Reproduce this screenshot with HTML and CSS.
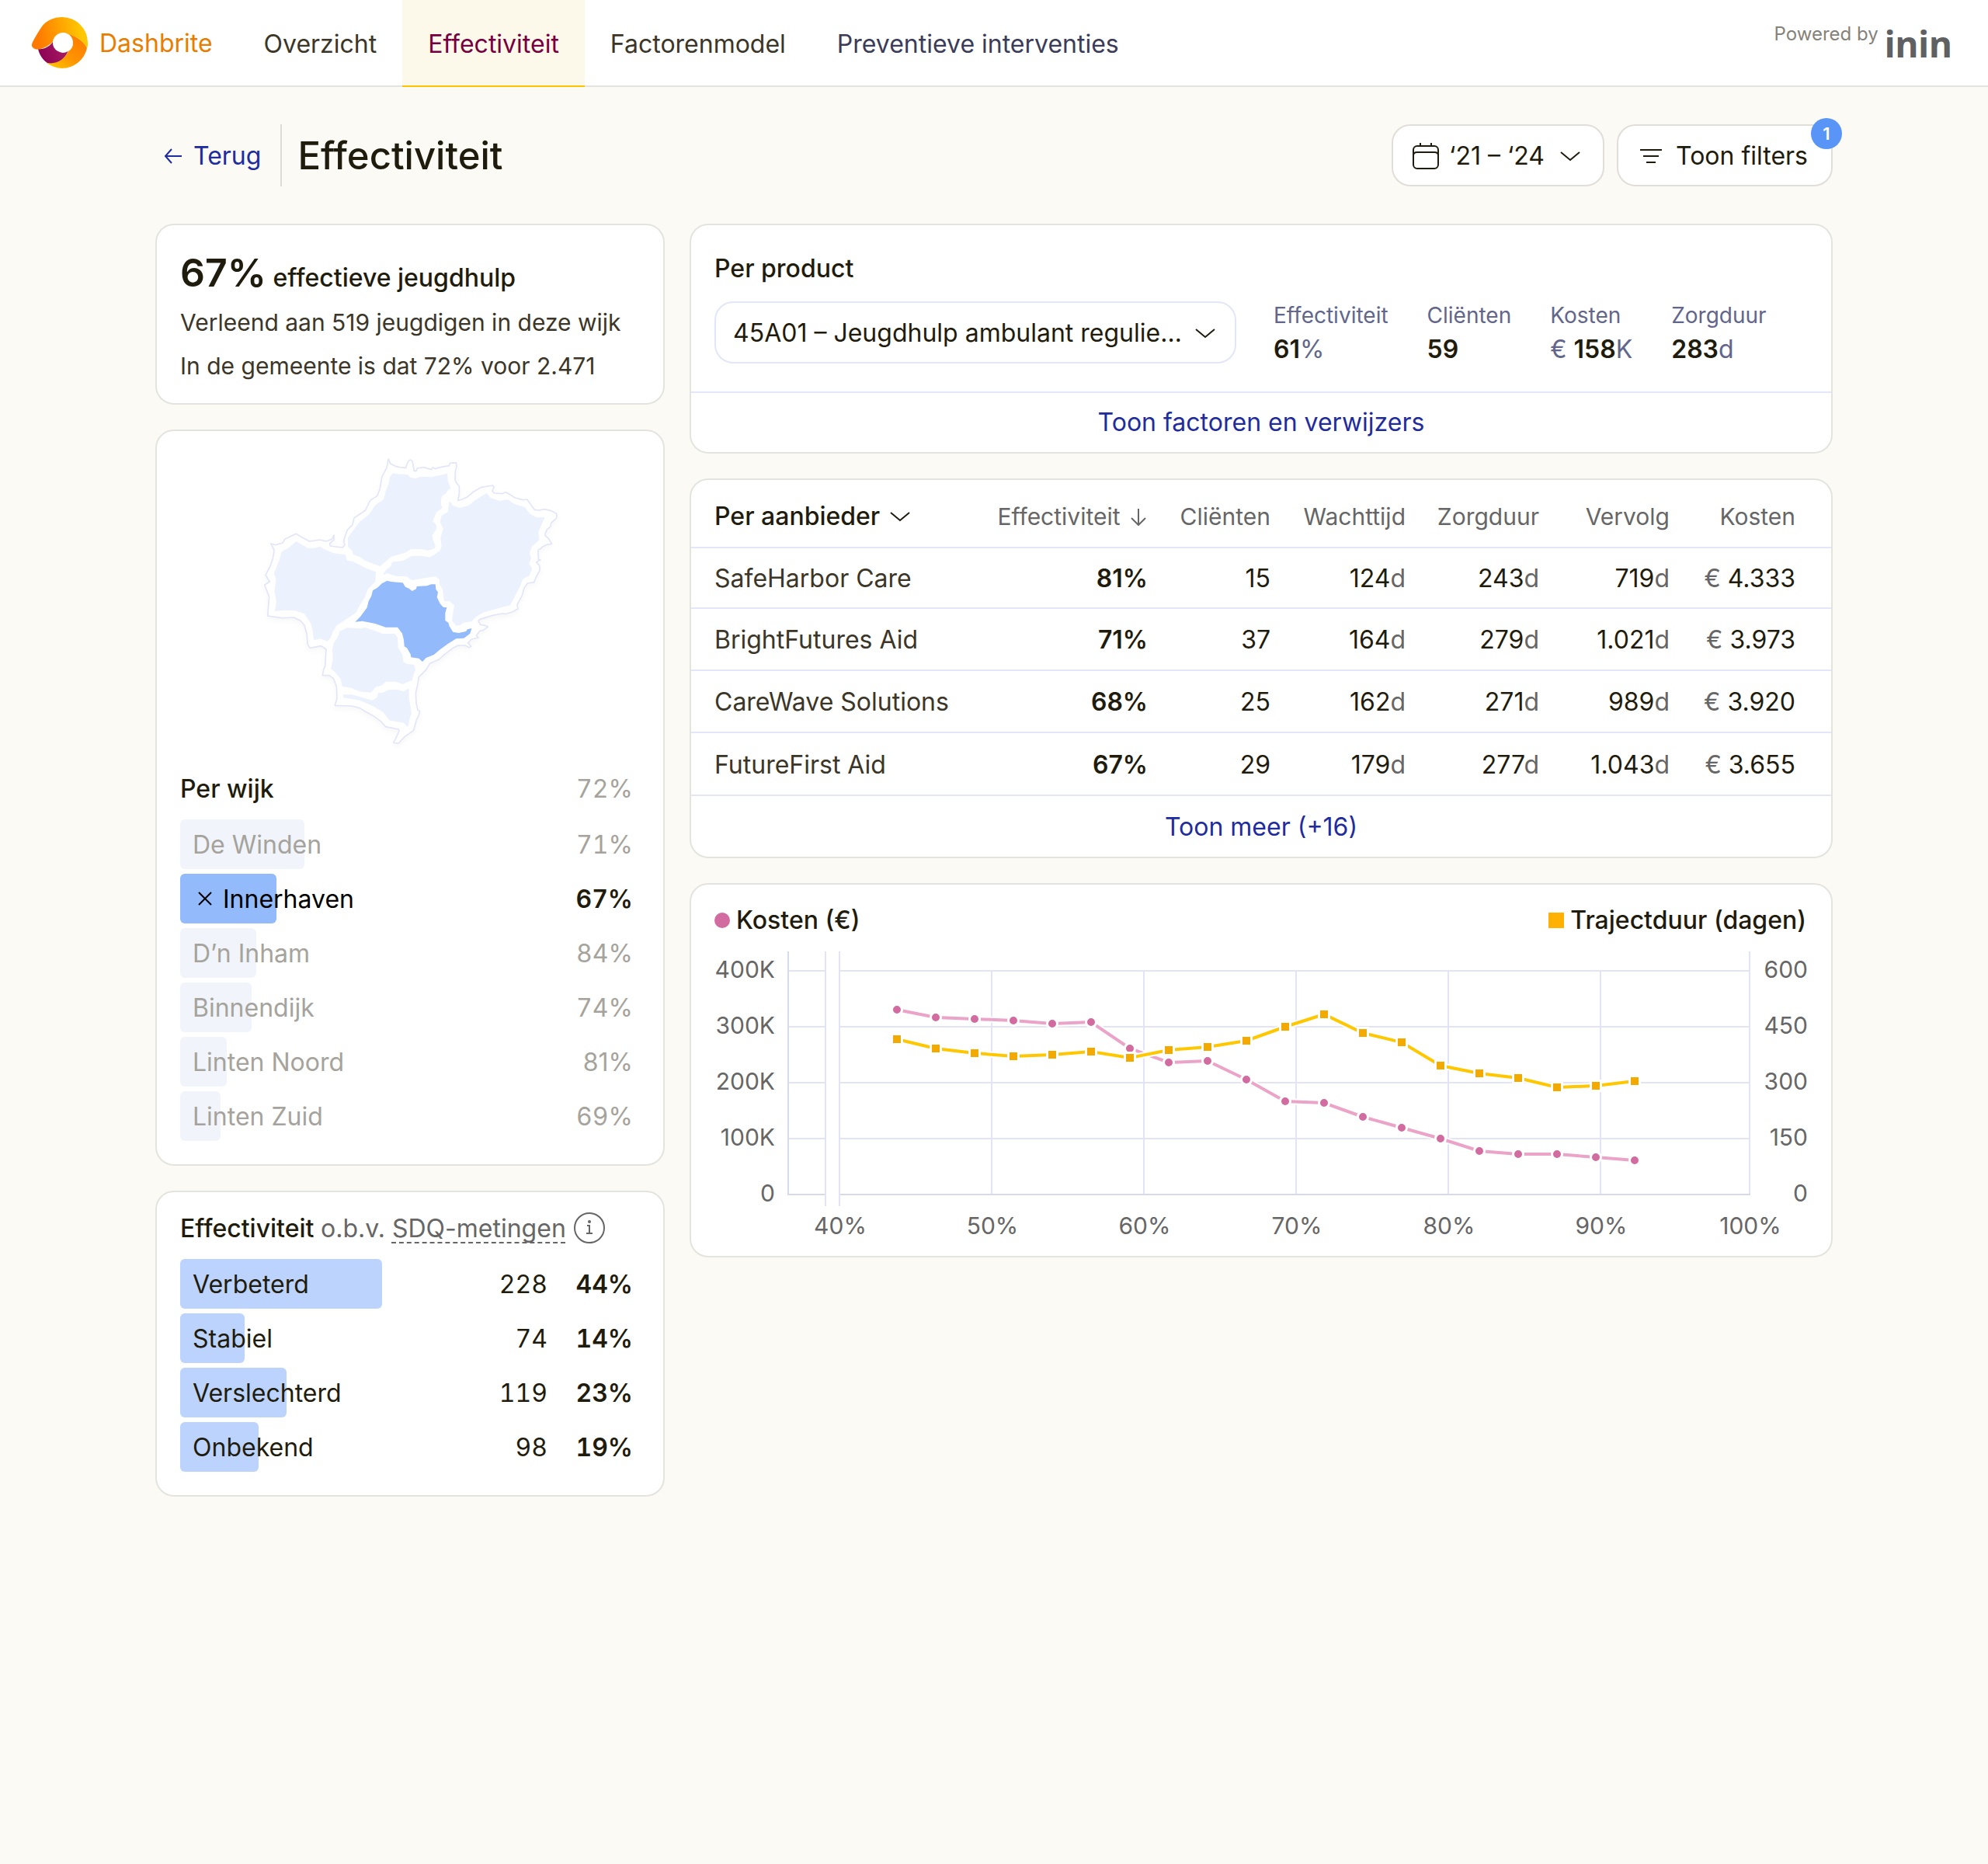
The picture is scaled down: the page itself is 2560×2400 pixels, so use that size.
FILE: index.html
```html
<!DOCTYPE html>
<html lang="nl">
<head>
  <meta charset="UTF-8">
  <meta name="viewport" content="width=device-width, initial-scale=1.0">
  <title>Dashbrite - Effectiviteit</title>
  <link rel="stylesheet" href="styles.css">
</head>
<body>

  <header class="topbar">
    <a class="brand" href="#">
      <svg class="brand-logo" viewBox="0 0 73 66" aria-hidden="true">
        <defs>
          <linearGradient id="logo-top" x1="0" y1="0.5" x2="1" y2="0.4">
            <stop offset="0.1" stop-color="#ff7a00"/>
            <stop offset="0.9" stop-color="#ffc800"/>
          </linearGradient>
          <linearGradient id="logo-bottom" x1="0.1" y1="1" x2="0.8" y2="0.2">
            <stop offset="0" stop-color="#ffc800"/>
            <stop offset="0.5" stop-color="#ff9500"/>
            <stop offset="1" stop-color="#ff8000"/>
          </linearGradient>
          <linearGradient id="logo-purple" x1="0" y1="0.6" x2="1" y2="0.3">
            <stop offset="0" stop-color="#8c0055"/>
            <stop offset="1" stop-color="#a81e62"/>
          </linearGradient>
        </defs>
        <path fill="url(#logo-bottom)" d="M46 21C58 24 69 32 72 40A33 33 0 0 1 40 66C33 66 26 63 20 59C32 60 42 56 48 44A13 13 0 0 0 46 21Z"/>
        <path fill="url(#logo-purple)" d="M9 41C11 49 15 55 21 59C33 61 43 55 47.500 44A13 13 0 0 1 28 32C24 38 16 42 9 41Z"/>
        <path fill="url(#logo-top)" d="M1 35C2 31 10 18 14 12C20 4 30 0 40 0A33 33 0 0 1 73 33C73 36 73 38 72 40C68 32 60 25 47 21.500A13 13 0 0 0 28 32C24 36 17 40 12 41C5 43 0 39 1 35Z"/>
      </svg>
      <span>Dashbrite</span>
    </a>
    <nav class="nav">
      <a href="#">Overzicht</a>
      <a class="active" href="#">Effectiviteit</a>
      <a href="#">Factorenmodel</a>
      <a class="preventie" href="#">Preventieve interventies</a>
    </nav>
    <div class="powered">
      <span>Powered by</span>
      <strong>inin</strong>
    </div>
  </header>

  <main class="page">
    <div class="page-head">
      <a class="back" href="#">
        <svg width="24" height="24" viewBox="0 0 24 24" aria-hidden="true"><path d="M23 12H2M10 3L2 12L10 21"/></svg>
        Terug
      </a>
      <h1>Effectiviteit</h1>
      <div class="actions">
        <button class="button" type="button">
          <svg width="36" height="36" viewBox="0 0 36 36" aria-hidden="true"><rect x="2" y="5" width="32" height="29" rx="5"/><path d="M2 17C2 14 4 13 7 13H29C32 13 34 14 34 17M11 1V5M25 1V5"/></svg>
          ‘21 – ‘24
          <svg class="chevron" width="28" height="28" viewBox="0 0 28 28" aria-hidden="true"><path d="M2 9L14 19L26 9"/></svg>
        </button>
        <button class="button filters" type="button">
          <svg width="28" height="20" viewBox="0 0 28 20" aria-hidden="true"><path d="M0 2H28M4 10H24M8 18H20"/></svg>
          Toon filters
          <span class="badge">1</span>
        </button>
      </div>
    </div>

    <div class="columns">
      <div class="column">
        <section class="card summary">
          <h2><strong>67%</strong> effectieve jeugdhulp</h2>
          <p>Verleend aan 519 jeugdigen in deze wijk</p>
          <p>In de gemeente is dat 72% voor 2.471</p>
        </section>

        <section class="card districts">
          <svg class="map" viewBox="-6 0 1260 1230" role="img" aria-label="Kaart van de wijken">
            <path class="map-outline" d="M541 66L548 84L568 94L585 98L608 100C612 90 614 72 625 69C634 72 634 76 636 90L640 112L648 112L652 102L677 98L707 107L712 99L720 104L745 97L775 92L778 82L802 80L804 96L799 110L798 145C800 160 812 165 814 172L814 200L809 226L826 222L846 212L870 192L900 175L944 168L948 174L942 190L950 198L980 200L992 194L1002 198L1030 216L1060 224L1076 222L1105 262L1125 264L1142 260L1170 266L1188 276C1194 286 1192 292 1186 298L1170 312L1166 328L1153 338L1147 352L1146 362L1158 372L1172 394L1154 396L1134 406L1130 412L1120 416L1118 424L1120 440L1120 454L1128 456L1118 460L1112 465L1124 478L1126 494L1114 516L1103 542L1078 546L1066 562L1056 596L1038 628L1041 644L1020 656L996 664L980 663L940 671L894 685L888 692L896 706L918 710L925 714L906 728L894 730L880 748L888 756L862 762L848 776L860 790L852 794L836 786L810 786L790 796L758 820L736 840L700 856L686 880L658 908L654 935L646 970L648 1010L654 1036L662 1040L658 1056L648 1076L638 1114L604 1138L580 1164L560 1162L568 1148L582 1116L580 1110L530 1100L510 1078L482 1058L446 1038L430 1028L400 1020L334 1018L342 990L340 945L328 914L312 902L286 902L290 880L296 866L300 800L280 788L238 796L228 780L226 745L216 708L200 690L175 678L130 680L74 672L78 620L80 598L62 552L82 540L66 514L84 480L94 450L100 418L86 392L104 398L132 390L140 376L155 368L184 355L206 368L236 384L275 378L300 384L322 376L330 360L330 378L314 392L316 402L364 408L372 398L368 380L382 340L402 320L408 294L452 264L470 226L498 208L508 180L516 134L534 100Z"/>
            <path class="map-area" d="M558 120L575 124L614 126L626 137L645 141L665 134L706 136L735 130L769 122L770 150L782 180L772 184L762 200L750 206L744 218L744 240L748 256L726 272L712 306L724 318L728 334L710 360L712 378L722 400L720 410L694 420L670 414L628 414L605 428L570 438L550 444L530 462L508 480L480 470L450 458L430 444L404 435L400 420L384 404L384 370L402 345L428 310L466 280L490 244L522 222L530 190L542 160L546 135Z"/>
            <path class="map-area" d="M920 198L935 216L970 228L1000 222L1028 240L1068 252L1085 276L1112 292L1145 290L1132 320L1120 350L1124 378L1094 405L1086 430L1092 450L1084 470L1096 490L1085 516L1060 530L1048 560L1030 595L1012 630L975 640L910 658L880 674L862 694L830 698L818 708L802 710L786 690L790 660L795 630L775 614L756 616L752 590L750 570L738 550L738 532L722 520L680 526L632 534L610 520L570 518L535 508L518 516L530 496L550 480L555 464L600 458L630 440L670 440L700 446L740 420L746 405L742 370L752 335L740 310L746 285L770 270L776 228L790 246L815 255L850 246L875 225Z"/>
            <path class="map-area" d="M184 384L205 396L230 410L254 410L276 404L296 416L330 430L375 436L380 458L405 462L455 488L492 502L490 540L460 570L450 600L430 630L415 660L375 686L340 710L325 735L318 755L305 770L276 760L252 766L248 730L240 700L216 664L180 652L140 650L102 654L108 615L100 580L106 530L98 508L118 460L128 424L156 408Z"/>
            <path class="map-area selected" d="M536 536L550 540L596 544L606 560L620 566L632 576L648 568L650 558L690 556L706 550L722 550L724 570L732 580L728 600L740 625L752 638L766 640L760 660L760 690L772 698L776 712L790 734L812 738L840 732L846 724L862 720L856 740L832 758L802 760L770 780L740 802L716 822L686 834L672 849L658 836L628 832L626 820L612 796L602 790L600 765L594 740L576 716L530 716L490 702L440 692L412 695L432 675L458 640L464 615L475 595L480 574L500 562L516 546Z"/>
            <path class="map-area" d="M352 732L380 718L436 720L450 716L485 728L520 742L565 740L576 755L578 795L594 820L598 850L612 858L640 860L645 880L634 910L634 920L595 936L570 926L530 926L515 940L490 948L474 968L430 964L395 950L362 944L356 915L335 890L318 876L326 840L324 800L330 775L344 755Z"/>
            <path class="map-area" d="M366 976L400 976L440 988L478 998L498 986L500 970L520 968L540 958L575 956L598 964L620 952L620 990L630 1048L622 1070L616 1102L600 1085L545 1076L520 1044L480 1020L430 998L366 988Z"/>
          </svg>
          <div class="card-title">
            <h2>Per wijk</h2>
            <span class="value">72%</span>
          </div>
          <ul class="bars">
            <li><button type="button"><span class="bar" style="width: 160px"></span><span class="name">De Winden</span><span class="value">71%</span></button></li>
            <li><button class="selected" type="button"><span class="bar" style="width: 124px"></span><svg class="close" width="18" height="18" viewBox="0 0 18 18" aria-hidden="true"><path d="M1 1L17 17M17 1L1 17"/></svg><span class="name">Innerhaven</span><span class="value">67%</span></button></li>
            <li><button type="button"><span class="bar" style="width: 98px"></span><span class="name">D’n Inham</span><span class="value">84%</span></button></li>
            <li><button type="button"><span class="bar" style="width: 92px"></span><span class="name">Binnendijk</span><span class="value">74%</span></button></li>
            <li><button type="button"><span class="bar" style="width: 60px"></span><span class="name">Linten Noord</span><span class="value proportional">81%</span></button></li>
            <li><button type="button"><span class="bar" style="width: 52px"></span><span class="name">Linten Zuid</span><span class="value">69%</span></button></li>
          </ul>
        </section>

        <section class="card sdq">
          <div class="card-title">
            <h2>Effectiviteit <span class="basis">o.b.v. <a href="#">SDQ-metingen</a></span></h2>
            <button class="info" type="button" aria-label="Uitleg">
              <svg width="40" height="40" viewBox="0 0 40 40" aria-hidden="true"><circle cx="20" cy="20" r="19"/><path d="M17 17H20V27M16 27H24"/><circle class="dot" cx="20" cy="12" r="2"/></svg>
            </button>
          </div>
          <ul class="bars">
            <li><span class="bar" style="width: 260px"></span><span class="name">Verbeterd</span><span class="count">228</span><span class="value">44%</span></li>
            <li><span class="bar" style="width: 83px"></span><span class="name">Stabiel</span><span class="count">74</span><span class="value">14%</span></li>
            <li><span class="bar" style="width: 137px"></span><span class="name">Verslechterd</span><span class="count">119</span><span class="value">23%</span></li>
            <li><span class="bar" style="width: 101px"></span><span class="name">Onbekend</span><span class="count">98</span><span class="value">19%</span></li>
          </ul>
        </section>
      </div>

      <div class="column">
        <section class="card product">
          <div class="product-body">
            <div class="product-choice">
              <label for="product">Per product</label>
              <div class="select">
                <select id="product">
                  <option>45A01 – Jeugdhulp ambulant regulie…</option>
                </select>
                <svg class="chevron" width="28" height="28" viewBox="0 0 28 28" aria-hidden="true"><path d="M2 9L14 19L26 9"/></svg>
              </div>
            </div>
            <dl class="stats">
              <div><dt>Effectiviteit</dt><dd><b>61</b>%</dd></div>
              <div><dt>Cliënten</dt><dd><b>59</b></dd></div>
              <div><dt>Kosten</dt><dd>€ <b>158</b>K</dd></div>
              <div><dt>Zorgduur</dt><dd><b>283</b>d</dd></div>
            </dl>
          </div>
          <a class="card-link" href="#">Toon factoren en verwijzers</a>
        </section>

        <section class="card providers">
          <table>
            <thead>
              <tr>
                <th class="col-name"><button type="button">Per aanbieder <svg class="chevron" width="28" height="28" viewBox="0 0 28 28" aria-hidden="true"><path d="M2 9L14 19L26 9"/></svg></button></th>
                <th class="col-effect">Effectiviteit <svg class="sort" width="20" height="22" viewBox="0 0 20 22" aria-hidden="true"><path d="M10 0V20M1 12L10 21L19 12"/></svg></th>
                <th class="col-clients">Cliënten</th>
                <th class="col-wait">Wachttijd</th>
                <th class="col-care">Zorgduur</th>
                <th class="col-next">Vervolg</th>
                <th class="col-cost">Kosten</th>
              </tr>
            </thead>
            <tbody>
              <tr><td>SafeHarbor Care</td><td>81%</td><td>15</td><td>124<i>d</i></td><td>243<i>d</i></td><td>719<i>d</i></td><td><i>€</i> 4.333</td></tr>
              <tr><td>BrightFutures Aid</td><td>71%</td><td>37</td><td>164<i>d</i></td><td>279<i>d</i></td><td>1.021<i>d</i></td><td><i>€</i> 3.973</td></tr>
              <tr><td>CareWave Solutions</td><td>68%</td><td>25</td><td>162<i>d</i></td><td>271<i>d</i></td><td>989<i>d</i></td><td><i>€</i> 3.920</td></tr>
              <tr><td>FutureFirst Aid</td><td>67%</td><td>29</td><td>179<i>d</i></td><td>277<i>d</i></td><td>1.043<i>d</i></td><td><i>€</i> 3.655</td></tr>
            </tbody>
          </table>
          <a class="card-link" href="#">Toon meer (+16)</a>
        </section>

        <section class="card trend">
          <div class="legend">
            <span class="legend-cost">Kosten (€)</span>
            <span class="legend-days">Trajectduur (dagen)</span>
          </div>
          <svg class="chart" viewBox="0 0 1408 370" role="img" aria-label="Kosten en trajectduur per effectiviteit">
            <defs>
              <marker id="dot" markerUnits="userSpaceOnUse" markerWidth="18" markerHeight="18" refX="9" refY="9">
                <circle cx="9" cy="9" r="6.500" fill="#d16ba0" stroke="#fff" stroke-width="3"/>
              </marker>
              <marker id="square" markerUnits="userSpaceOnUse" markerWidth="18" markerHeight="18" refX="9" refY="9">
                <rect x="2.500" y="2.500" width="13" height="13" fill="#f2a900" stroke="#fff" stroke-width="3"/>
              </marker>
            </defs>
            <path class="grid" d="M95 25H143M161 25H1333M95 97H143M161 97H1333M95 169H143M161 169H1333M95 241H143M161 241H1333"/>
            <path class="grid" d="M143 0V328M161 0V328M357 25V313M553 25V313M749 25V313M945 25V313M1141 25V313M1333 0V313"/>
            <path class="axis" d="M95 0V313H142M162 313H1334"/>
            <g class="labels left">
              <text x="78" y="34">400K</text>
              <text x="78" y="106">300K</text>
              <text x="78" y="178">200K</text>
              <text x="78" y="250">100K</text>
              <text x="78" y="322">0</text>
            </g>
            <g class="labels right">
              <text x="1408" y="34">600</text>
              <text x="1408" y="106">450</text>
              <text x="1408" y="178">300</text>
              <text x="1408" y="250">150</text>
              <text x="1408" y="322">0</text>
            </g>
            <g class="labels bottom">
              <text x="162" y="364">40%</text>
              <text x="358" y="364">50%</text>
              <text x="554" y="364">60%</text>
              <text x="750" y="364">70%</text>
              <text x="946" y="364">80%</text>
              <text x="1142" y="364">90%</text>
              <text x="1334" y="364">100%</text>
            </g>
            <polyline class="halo" points="235,75 285,85 335,87 385,89 435,93 485,91 535,125 585,143 635,141 685,165 735,193 785,195 835,213 885,227 935,241 985,257 1035,261 1085,261 1135,265 1185,269"/>
            <polyline class="line-cost" points="235,75 285,85 335,87 385,89 435,93 485,91 535,125 585,143 635,141 685,165 735,193 785,195 835,213 885,227 935,241 985,257 1035,261 1085,261 1135,265 1185,269"/>
            <polyline class="halo" points="235,113 285,125 335,131 385,135 435,133 485,129 535,137 585,127 635,123 685,115 735,97 785,81 835,105 885,117 935,147 985,157 1035,163 1085,175 1135,173 1185,167"/>
            <polyline class="line-days" points="235,113 285,125 335,131 385,135 435,133 485,129 535,137 585,127 635,123 685,115 735,97 785,81 835,105 885,117 935,147 985,157 1035,163 1085,175 1135,173 1185,167"/>
          </svg>
        </section>
      </div>
    </div>
  </main>

</body>
</html>
```

FILE: styles.css
```css
* {
  box-sizing: border-box;
}

body {
  margin: 0;
  min-height: 100vh;
  background-color: #fbfaf5;
  color: #1f1c0e;
  font-family: Inter, sans-serif;
  font-size: 32px;
  line-height: 40px;
}

h1, h2, p, ul, dl, dd {
  margin: 0;
  padding: 0;
}

h2 {
  font-size: 32px;
  font-weight: 500;
}

ul {
  list-style: none;
}

a {
  color: #1f2c9e;
  text-decoration: none;
}

button, select {
  font: inherit;
  color: inherit;
  background: none;
  border: none;
  padding: 0;
  cursor: pointer;
}

svg {
  flex: none;
  fill: none;
  stroke: currentColor;
  stroke-width: 2;
}

/* Top bar */
.topbar {
  display: flex;
  height: 112px;
  padding-left: 40px;
  padding-right: 46px;
  background-color: #fff;
  border-bottom: 2px solid #e4e4df;
}

.brand {
  display: flex;
  align-items: center;
  gap: 15px;
  padding-right: 33px;
  color: #e87d00;
}

.brand span {
  padding-top: 2px;
}

.brand-logo {
  width: 73px;
  height: 66px;
  stroke: none;
}

.nav {
  display: flex;
}

.nav a {
  display: flex;
  align-items: center;
  height: 112px;
  padding: 4px 33px 0;
  border-bottom: 2px solid transparent;
  color: #3b3628;
}

.nav a.active {
  background-color: #fdf9ea;
  border-color: #fdc300;
  color: #76003f;
}

.nav a.preventie {
  color: #3b3c58;
}

.powered {
  display: flex;
  gap: 8px;
  margin-left: auto;
  padding-top: 24px;
  color: #85827a;
  font-size: 24px;
}

.powered strong {
  padding-top: 12px;
  color: #5f6062;
  font-family: "Noto Sans", sans-serif;
  font-size: 46px;
  font-weight: 700;
}

/* Page head */
.page {
  padding: 48px 200px;
}

.page-head {
  display: flex;
  align-items: center;
  margin-bottom: 48px;
}

.back {
  display: flex;
  align-items: center;
  gap: 14px;
  height: 80px;
  padding: 2px 25px 0 11px;
  border-right: 2px solid #dddcd7;
}

h1 {
  padding-top: 2px;
  padding-left: 20px;
  font-size: 49px;
  font-weight: 500;
  line-height: 56px;
}

.actions {
  display: flex;
  gap: 16px;
  margin-left: auto;
}

.button {
  position: relative;
  display: flex;
  align-items: center;
  gap: 12px;
  height: 80px;
  padding: 2px 28px 0 24px;
  background-color: #fff;
  border: 2px solid #e1deda;
  border-radius: 24px;
}

.button .chevron {
  margin-left: 7px;
}

.filters {
  gap: 18px;
  padding: 2px 30px 0 28px;
}

.badge {
  position: absolute;
  top: -10px;
  right: -14px;
  width: 40px;
  height: 40px;
  border-radius: 50%;
  background-color: #5895f7;
  color: #fff;
  font-size: 22px;
  font-weight: 600;
  text-align: center;
}

/* Cards */
.columns {
  display: grid;
  grid-template-columns: 656px 1fr;
  gap: 32px;
  align-items: start;
}

.column {
  display: flex;
  flex-direction: column;
  gap: 32px;
  min-width: 0;
}

.card {
  background-color: #fff;
  border: 2px solid #e4e4df;
  border-radius: 24px;
  overflow: hidden;
}

.card-title {
  display: flex;
  align-items: center;
  height: 40px;
}

.card-link {
  display: block;
  padding: 18px 30px;
  border-top: 2px solid #e3e5f8;
  text-align: center;
}

.summary {
  padding: 32px 30px 20px;
}

.summary h2 {
  line-height: 58px;
}

.summary strong {
  font-size: 50px;
  font-weight: 600;
}

.summary p {
  color: #3b3628;
  font-size: 30px;
  line-height: 56px;
}

/* District map and bars */
.districts {
  padding: 14px 30px 30px;
}

.map {
  display: block;
  width: 420px;
  height: 410px;
  margin: 0 auto 16px;
  stroke: none;
}

.map-outline {
  fill: #fff;
  stroke: #e3e5f8;
  stroke-width: 5;
  stroke-linejoin: round;
  filter: drop-shadow(0 10px 10px rgba(0, 0, 0, 0.03));
}

.map-area {
  fill: #ebf1fd;
}

.map-area.selected {
  fill: #93bafa;
}

.bars {
  display: flex;
  flex-direction: column;
  gap: 6px;
  margin-top: 20px;
}

.bars button, .sdq li {
  position: relative;
  display: flex;
  align-items: center;
  width: 100%;
  height: 64px;
  padding-left: 16px;
  text-align: left;
}

.bar {
  position: absolute;
  left: 0;
  top: 0;
  height: 64px;
  border-radius: 6px;
  background-color: #bbd3fd;
}

.name, .close {
  position: relative;
}

.card-title h2, .name, .count, .value {
  padding-top: 2px;
}

.close {
  margin: 0 14px 0 7px;
}

.value {
  margin-left: auto;
  padding-right: 9px;
  font-variant-numeric: tabular-nums;
}

.districts .value, .districts button {
  color: #a5a39c;
}

.districts .bar {
  background-color: #f1f5fb;
}

.districts .selected {
  color: #000;
}

.districts .selected .bar {
  background-color: #93bafa;
}

.districts .selected .value {
  color: #1f1c0e;
  font-weight: 600;
}

.districts .proportional {
  font-variant-numeric: normal;
}

.sdq {
  padding: 26px 30px 30px;
}

.basis, .basis a {
  color: #666;
  font-weight: 400;
}

.basis a {
  text-decoration: underline dashed 2px;
  text-decoration-skip-ink: none;
  text-underline-offset: 6px;
}

.info {
  display: flex;
  margin-left: 10px;
  color: #666;
}

.info .dot {
  fill: #666;
  stroke: none;
}

.count {
  margin-left: auto;
  font-variant-numeric: tabular-nums;
}

.sdq .value {
  width: 119px;
  margin-left: 0;
  font-weight: 600;
  text-align: right;
}

/* Per product */
.product-body {
  display: flex;
  align-items: flex-end;
  gap: 48px;
  padding: 36px 30px;
}

.product-choice label {
  display: block;
  margin-bottom: 22px;
  font-weight: 500;
}

.select {
  position: relative;
}

.select select {
  width: 672px;
  height: 80px;
  padding: 2px 70px 0 22px;
  border: 2px solid #e3e5f8;
  border-radius: 24px;
  appearance: none;
}

.select .chevron {
  position: absolute;
  right: 26px;
  top: 27px;
  pointer-events: none;
}

.stats {
  display: flex;
  gap: 50px;
  color: #62668a;
}

.stats dt {
  font-size: 28px;
  line-height: 52px;
}

.stats dd {
  line-height: 36px;
}

.stats b {
  color: #1f1c0e;
  font-weight: 600;
}

/* Per aanbieder */
.providers table {
  width: 100%;
  border-collapse: collapse;
  table-layout: fixed;
}

.providers th, .providers td {
  height: 80px;
  padding: 2px 0 0;
  text-align: right;
}

.providers th {
  height: 87px;
  padding-top: 8px;
  color: #666;
  font-size: 30px;
  font-weight: 400;
}

.providers tbody tr {
  border-top: 2px solid #e3e5f8;
}

.providers tbody tr:first-child td {
  height: 78px;
}

.providers th:first-child, .providers td:first-child {
  padding-left: 30px;
  text-align: left;
}

.providers th:last-child, .providers td:last-child {
  padding-right: 46px;
}

.providers td:first-child {
  color: #3b3628;
}

.providers td:nth-child(2) {
  font-weight: 600;
}

.providers i {
  color: #666;
  font-style: normal;
}

.providers button {
  display: flex;
  align-items: center;
  gap: 12px;
  color: #1f1c0e;
  font-size: 32px;
  font-weight: 500;
}

.providers .card-link {
  padding-top: 20px;
}

.sort {
  margin-left: 5px;
  margin-right: 2px;
  vertical-align: -1px;
}

.col-effect {
  width: 236px;
}

.col-clients {
  width: 158px;
}

.col-wait {
  width: 174px;
}

.col-care {
  width: 172px;
}

.col-next {
  width: 168px;
}

.col-cost {
  width: 208px;
}

/* Chart */
.trend {
  padding: 26px 30px 22px;
}

.legend {
  display: flex;
  justify-content: space-between;
  margin-bottom: 20px;
  padding-right: 2px;
  font-weight: 500;
}

.legend span {
  display: flex;
  align-items: center;
  gap: 8px;
}

.legend span::before {
  content: "";
  width: 20px;
  height: 20px;
}

.legend .legend-cost::before {
  border-radius: 50%;
  background-color: #d16ba0;
}

.legend .legend-days::before {
  background-color: #ffb000;
}

.chart {
  display: block;
  width: 100%;
}

.grid {
  stroke: #e3e3f6;
}

.axis {
  stroke: #d7d9ee;
}

.labels {
  fill: #666;
  stroke: none;
  font-size: 30px;
  text-anchor: end;
}

.labels.bottom {
  text-anchor: middle;
}

.halo {
  stroke: #fff;
  stroke-width: 8;
}

.line-cost {
  stroke: #eba3c8;
  stroke-width: 4;
  marker-start: url(#dot);
  marker-mid: url(#dot);
  marker-end: url(#dot);
}

.line-days {
  stroke: #ffc700;
  stroke-width: 4;
  marker-start: url(#square);
  marker-mid: url(#square);
  marker-end: url(#square);
}
```
